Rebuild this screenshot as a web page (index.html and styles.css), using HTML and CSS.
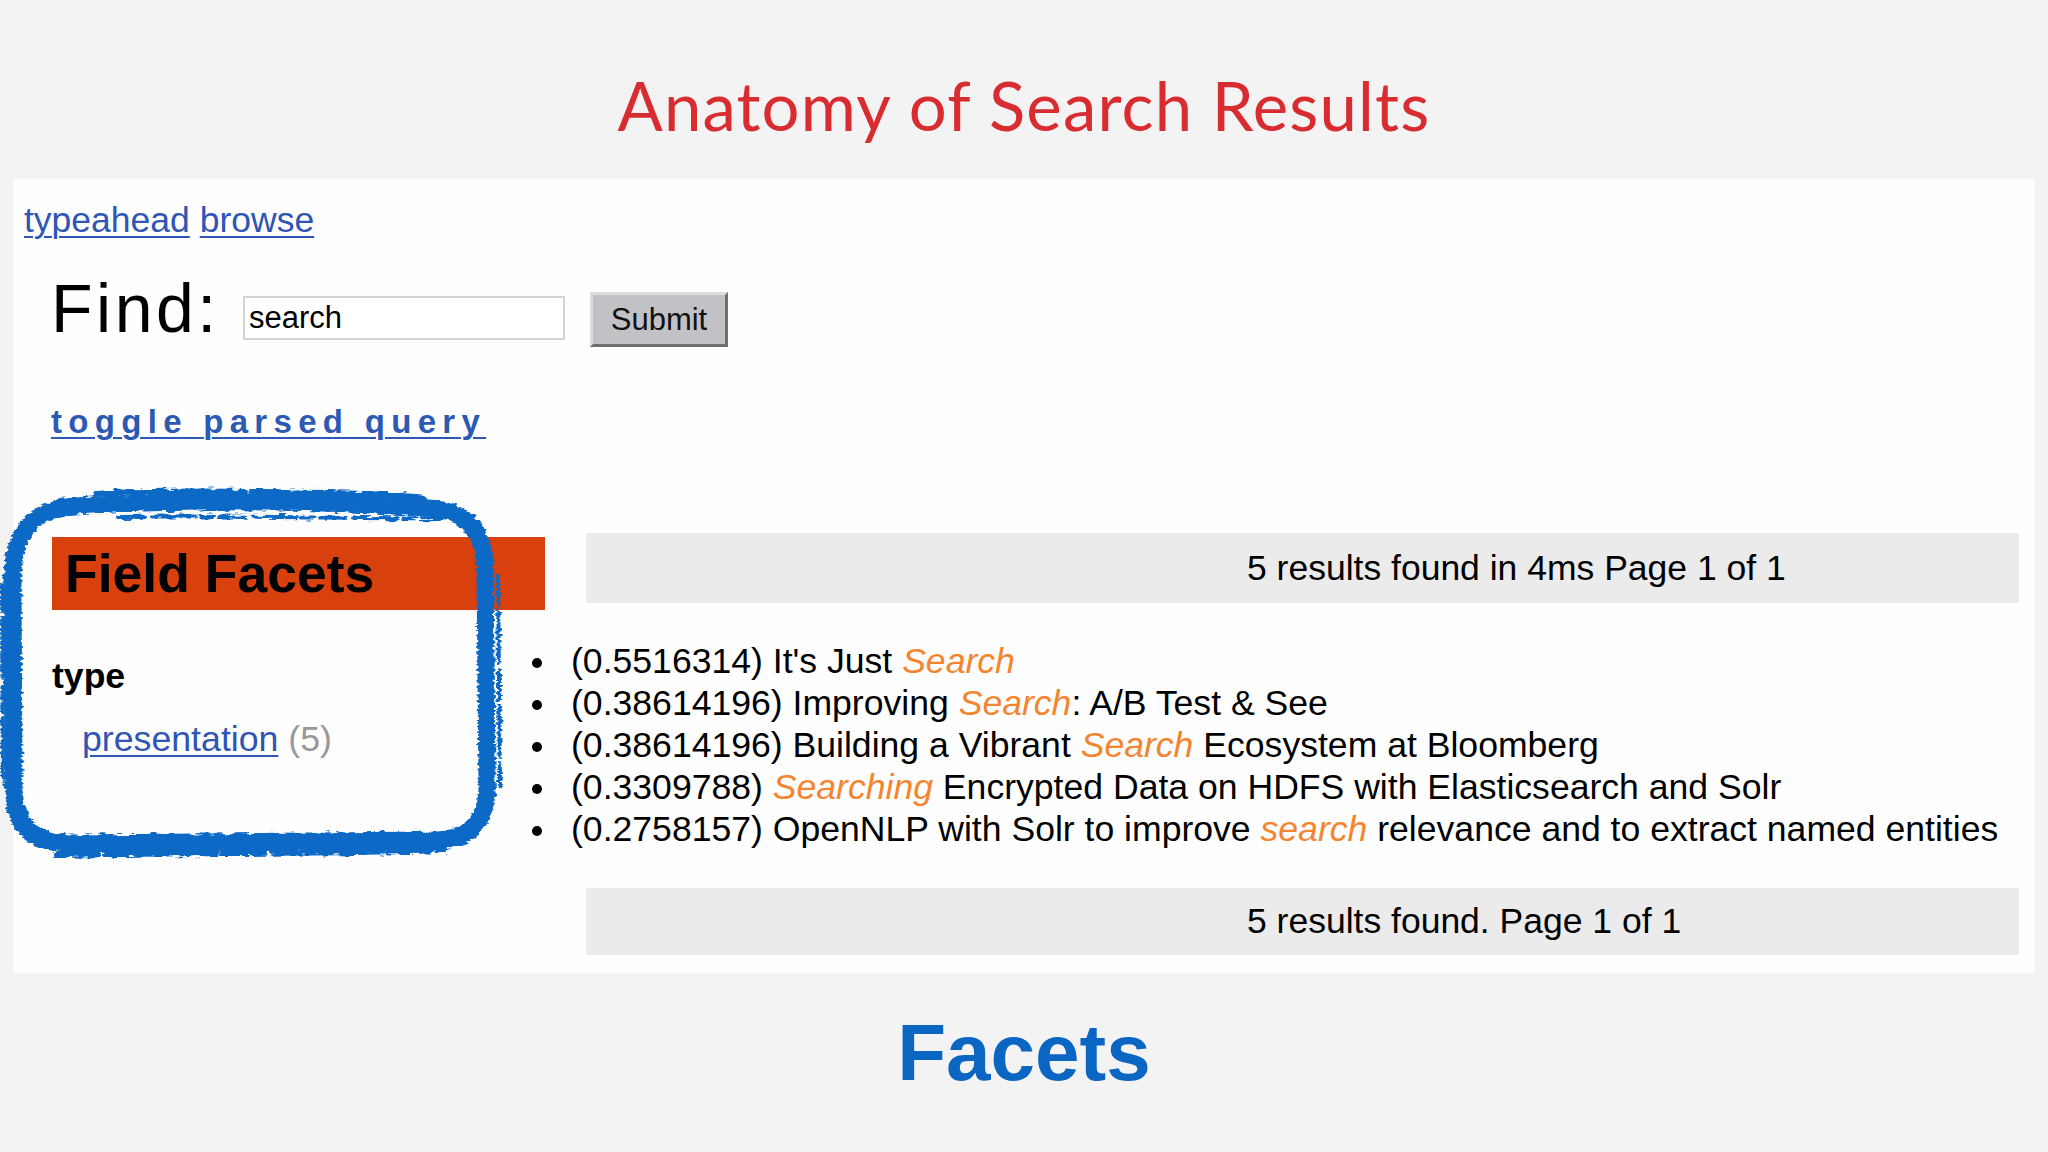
FILE: index.html
```html
<!DOCTYPE html>
<html lang="en">
<head>
<meta charset="utf-8">
<title>Anatomy of Search Results</title>
<link rel="stylesheet" href="styles.css">
</head>
<body>
<div class="slide">
  <h1 class="title">Anatomy of Search Results</h1>
  <div class="panel">
    <div class="nav"><a href="#">typeahead</a> <a href="#">browse</a></div>
    <form class="find">
      <label class="find-label">Find:</label>
      <input class="find-input" type="text" value="search">
      <button class="find-submit" type="button">Submit</button>
    </form>
    <a class="toggle" href="#">toggle parsed query</a>
    <div class="content">
      <aside class="facets">
        <h2 class="facets-head">Field Facets</h2>
        <h3 class="facet-field">type</h3>
        <div class="facet-item"><a href="#">presentation</a> <span class="count">(5)</span></div>
      </aside>
      <section class="results">
        <div class="bar">5 results found in 4ms Page 1 of 1</div>
        <ul class="hits">
          <li>(0.5516314) It's Just <em>Search</em></li>
          <li>(0.38614196) Improving <em>Search</em>: A/B Test &amp; See</li>
          <li>(0.38614196) Building a Vibrant <em>Search</em> Ecosystem at Bloomberg</li>
          <li>(0.3309788) <em>Searching</em> Encrypted Data on HDFS with Elasticsearch and Solr</li>
          <li>(0.2758157) OpenNLP with Solr to improve <em>search</em> relevance and to extract named entities</li>
        </ul>
        <div class="bar bar-bottom">5 results found. Page 1 of 1</div>
      </section>
    </div>
    <svg class="brush" width="512" height="384" viewBox="0 0 512 384" aria-hidden="true">
      <defs>
        <filter id="rough" x="-5%" y="-5%" width="110%" height="110%">
          <feTurbulence type="fractalNoise" baseFrequency="0.09 0.35" numOctaves="2" seed="7" result="noise"/>
          <feDisplacementMap in="SourceGraphic" in2="noise" scale="7" xChannelSelector="R" yChannelSelector="G"/>
        </filter>
      </defs>
      <g fill="none" stroke="#0e69c6" stroke-linecap="round" stroke-linejoin="round" filter="url(#rough)">
        <path d="M74 20 C200 13 330 16 428 22 Q483 25 485 82 L487 300 Q487 352 436 354 L72 357 Q15 357 14 302 L13 92 Q13 24 74 20Z" stroke-width="17"/>
        <path d="M78 15 C200 9 330 11 432 17 Q490 21 491 82 L493 300 Q493 359 438 361 L70 364 Q8 363 7 302 L6 92 Q7 19 78 15Z" stroke-width="5" stroke-dasharray="64 4 23 3 110 6 41 4 90 3"/>
        <path d="M72 25 C200 19 330 21 424 26 Q478 30 480 82 L482 300 Q482 347 434 349 L74 352 Q20 352 19 302 L18 92 Q18 28 72 25Z" stroke-width="5" stroke-dasharray="137 3 88 4 190 3 140 4"/>
        <path d="M96 8 C160 4 250 6 330 7 C380 8 410 10 424 12" stroke-width="6" stroke-dasharray="48 5 18 3 75 7 30 3"/>
        <path d="M118 31 C230 29 330 33 442 32" stroke-width="4" stroke-dasharray="26 8 44 5 12 6"/>
        <path d="M56 369 C200 366 330 368 444 364" stroke-width="6" stroke-dasharray="42 8 75 5 30 6"/>
        <path d="M498 90 L500 300" stroke-width="4" stroke-dasharray="30 6 50 8"/>
        <path d="M2 100 L3 300" stroke-width="4" stroke-dasharray="25 7 60 9"/>
        <path d="M30 40 Q40 30 55 26" stroke-width="4"/>
        <path d="M460 30 Q476 36 482 52" stroke-width="4"/>
      </g>
    </svg>
  </div>
  <div class="caption">Facets</div>
</div>
</body>
</html>
```

FILE: styles.css
```css
html, body {
  margin: 0;
  padding: 0;
}

body {
  background: #f3f3f3;
  font-family: "Liberation Sans", Arial, Helvetica, sans-serif;
  color: #000;
}

.slide {
  width: 2048px;
  height: 1152px;
  overflow: hidden;
}

.title {
  margin: 0;
  height: 179px;
  box-sizing: border-box;
  padding-top: 65px;
  text-align: center;
  font-family: "Lato", "Open Sans", sans-serif;
  font-weight: 400;
  font-size: 67px;
  line-height: 80px;
  color: #d82c31;
  letter-spacing: 1.2px;
}

.panel {
  position: relative;
  margin-left: 13px;
  width: 2021px;
  height: 794px;
  box-sizing: border-box;
  padding: 21px 15px 0 11px;
  background: #fefefe;
}

.nav {
  font-size: 35.5px;
  line-height: 41px;
}

.nav a,
.facet-item a {
  color: #2f55b5;
  text-decoration: underline;
  text-decoration-thickness: 2px;
  text-underline-offset: 4px;
}

.find {
  display: flex;
  align-items: flex-start;
  margin: 29px 0 0 24px;
  height: 77px;
}

.find-label {
  width: 195px;
  padding-left: 3px;
  box-sizing: border-box;
  font-size: 68px;
  line-height: 76px;
  letter-spacing: 3.5px;
}

.find-input {
  margin: 26px 0 0 0;
  width: 322px;
  height: 44px;
  box-sizing: border-box;
  border: 2px solid #d4d4d4;
  padding: 0 4px;
  background: #fff;
  font-family: "Liberation Sans", Arial, sans-serif;
  font-size: 31px;
  color: #000;
  outline: none;
}

.find-submit {
  margin: 22px 0 0 25px;
  width: 138px;
  height: 55px;
  box-sizing: border-box;
  border: 3px solid;
  border-color: #dcdcdc #6e6e6e #6e6e6e #dcdcdc;
  background: #c2c1c5;
  font-family: "Liberation Sans", Arial, sans-serif;
  font-size: 31px;
  color: #111;
  padding: 0;
}

.toggle {
  display: block;
  width: max-content;
  margin: 56px 0 0 27px;
  font-size: 33px;
  line-height: 38px;
  font-weight: 700;
  letter-spacing: 6.3px;
  color: #2c59b4;
  text-decoration: underline;
  text-decoration-thickness: 2px;
  text-underline-offset: 4px;
}

.content {
  display: flex;
  align-items: flex-start;
  gap: 41px;
  margin: 92px 0 0 28px;
}

.facets {
  width: 493px;
  flex: none;
}

.facets-head {
  margin: 4px 0 0 0;
  height: 73px;
  padding-left: 13px;
  background: #d8410e;
  font-size: 53.5px;
  line-height: 73px;
  font-weight: 700;
  color: #000;
}

.facet-field {
  margin: 46px 0 0 0;
  font-size: 35.6px;
  line-height: 41px;
  font-weight: 700;
}

.facet-item {
  margin-top: 22px;
  padding-left: 30px;
  font-size: 35.7px;
  line-height: 41px;
}

.count {
  color: #999;
}

.results {
  width: 1433px;
  flex: none;
}

.bar {
  height: 70px;
  box-sizing: border-box;
  padding-left: 661px;
  background: #ebebeb;
  font-size: 35.5px;
  line-height: 70px;
  white-space: nowrap;
}

.bar-bottom {
  margin-top: 38px;
  height: 67px;
  line-height: 67px;
}

.hits {
  list-style: none;
  margin: 37px 0 0 -54px;
  padding: 0;
  font-size: 35.6px;
  line-height: 42px;
  white-space: nowrap;
}

.hits li::before {
  content: "";
  display: inline-block;
  width: 10px;
  height: 10px;
  border-radius: 50%;
  background: #000;
  margin: 0 29px 5px 0;
}

.hits em {
  color: #f4852e;
  font-style: italic;
}

.brush {
  position: absolute;
  left: -13px;
  top: 307px;
}

.caption {
  margin-top: 35px;
  text-align: center;
  font-size: 80px;
  line-height: 90px;
  font-weight: 700;
  color: #0b66c3;
}
```
